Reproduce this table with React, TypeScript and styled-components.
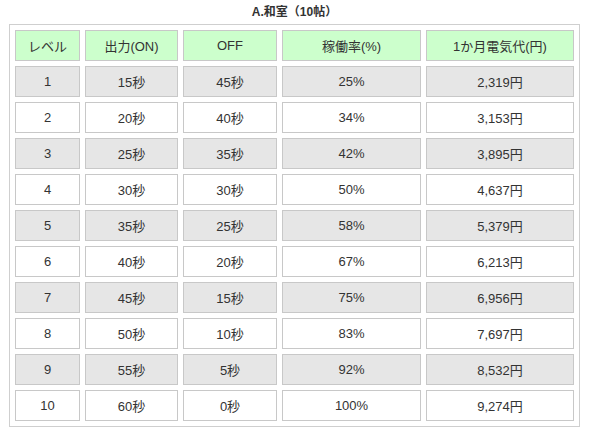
import React from "react";
import styled, { createGlobalStyle } from "styled-components";

const Global = createGlobalStyle`
  html, body { margin: 0; padding: 0; background: #fff; }
  body { font-family: "Liberation Sans", "Noto Sans CJK JP", sans-serif; color: #333; }
`;

const Page = styled.div`
  width: 597px;
  padding: 5px 0 0 9px;
  box-sizing: border-box;
`;

const Title = styled.div`
  width: 571px;
  text-align: center;
  font-size: 12px;
  font-weight: bold;
  line-height: 15px;
  height: 19px;
  color: #333;
`;

const Table = styled.div`
  width: 571px;
  box-sizing: border-box;
  border: 1px solid #cfcfcf;
  padding: 5px;
  display: grid;
  grid-template-columns: 65px 93px 94px 139px 148px;
  grid-auto-rows: 31px;
  gap: 5px;
`;

const Cell = styled.div<{ $variant: "head" | "gray" | "white" }>`
  box-sizing: border-box;
  border: 1px solid #c8c8c8;
  background: ${(p) =>
    p.$variant === "head" ? "#ccffcc" : p.$variant === "gray" ? "#e6e6e6" : "#ffffff"};
  display: flex;
  align-items: center;
  justify-content: center;
  font-size: 13px;
  color: #333;
`;

const headers = ["レベル", "出力(ON)", "OFF", "稼働率(%)", "1か月電気代(円)"];
const rows = [
  ["1", "15秒", "45秒", "25%", "2,319円"],
  ["2", "20秒", "40秒", "34%", "3,153円"],
  ["3", "25秒", "35秒", "42%", "3,895円"],
  ["4", "30秒", "30秒", "50%", "4,637円"],
  ["5", "35秒", "25秒", "58%", "5,379円"],
  ["6", "40秒", "20秒", "67%", "6,213円"],
  ["7", "45秒", "15秒", "75%", "6,956円"],
  ["8", "50秒", "10秒", "83%", "7,697円"],
  ["9", "55秒", "5秒", "92%", "8,532円"],
  ["10", "60秒", "0秒", "100%", "9,274円"],
];

export default function App() {
  return (
    <>
      <Global />
      <Page>
        <Title>A.和室（10帖）</Title>
        <Table>
          {headers.map((h) => (
            <Cell key={h} $variant="head">{h}</Cell>
          ))}
          {rows.map((r, i) =>
            r.map((c, j) => (
              <Cell key={`${i}-${j}`} $variant={i % 2 === 0 ? "gray" : "white"}>
                {c}
              </Cell>
            ))
          )}
        </Table>
      </Page>
    </>
  );
}
